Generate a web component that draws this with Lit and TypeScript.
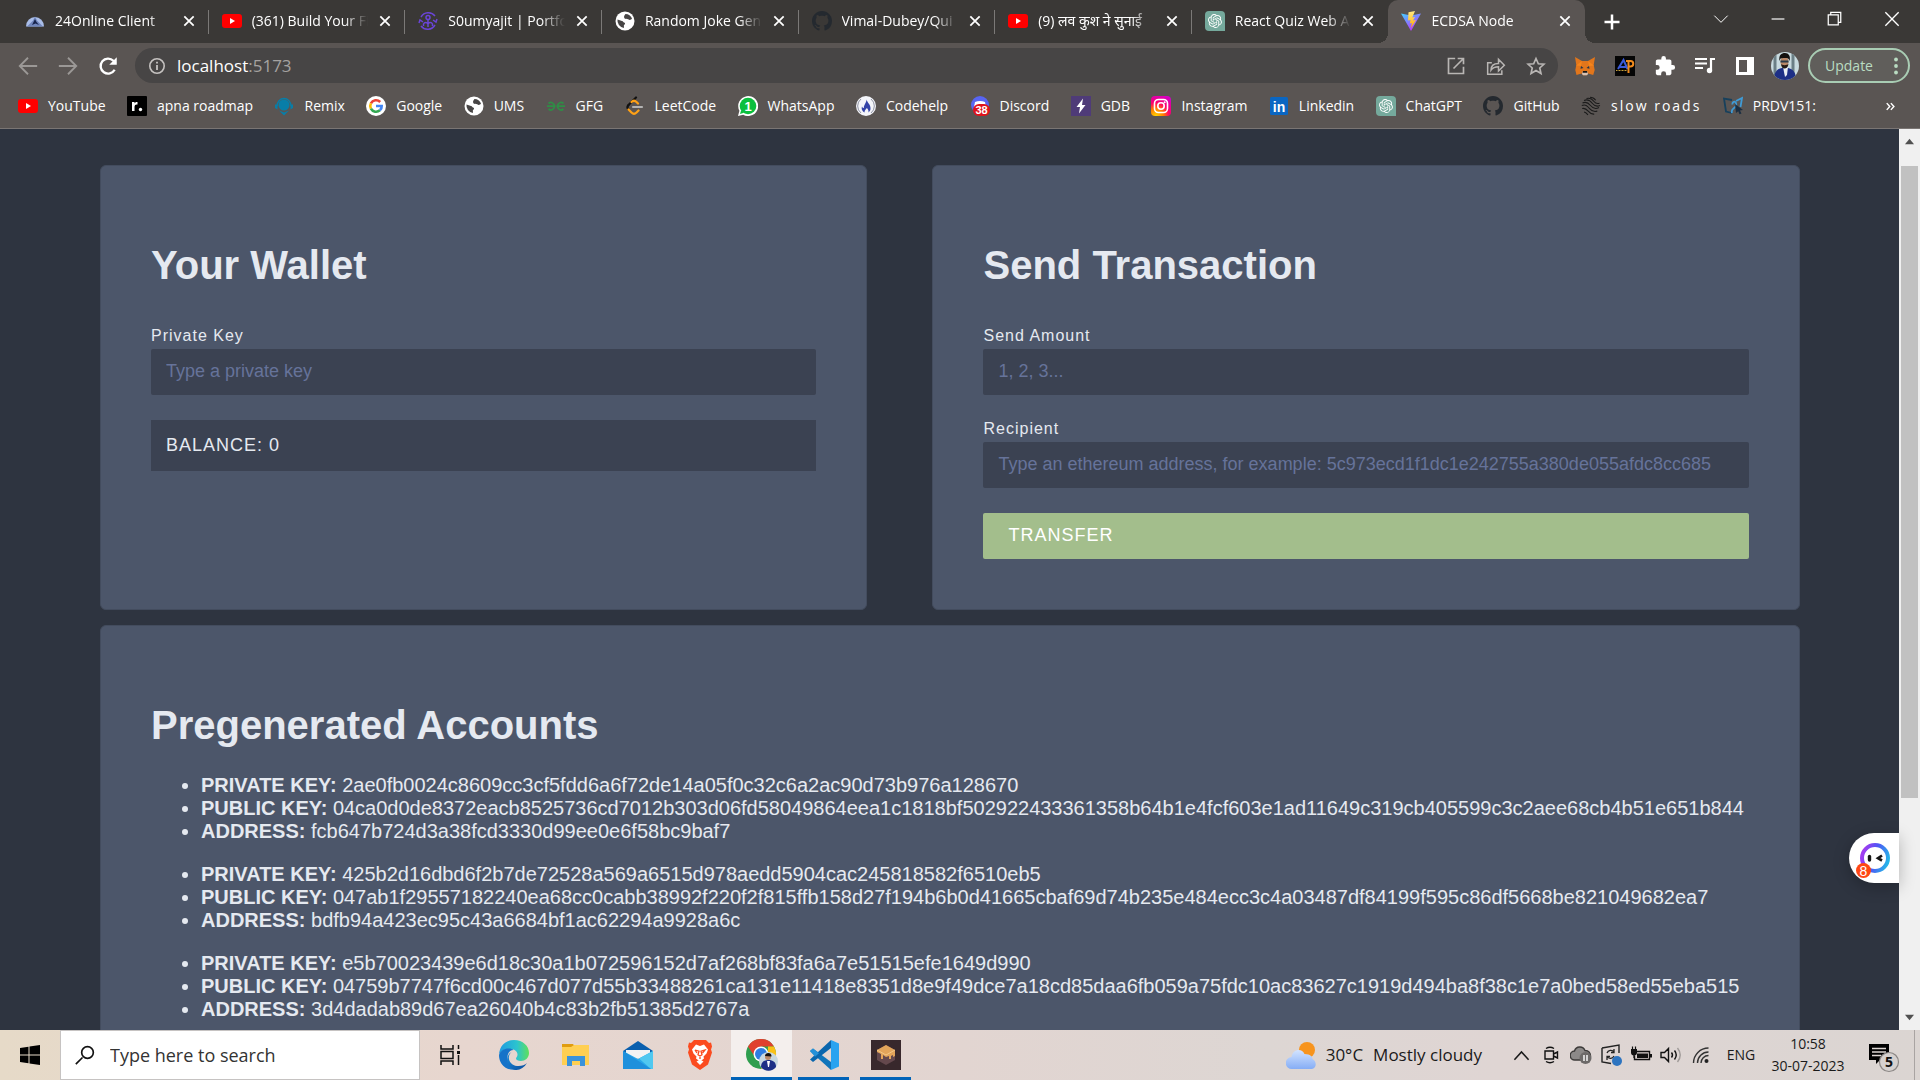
import { LitElement, html, css, svg, TemplateResult } from "lit";
import { customElement } from "lit/decorators.js";

/* ---------- icons ---------- */

const GITHUB =
  "M8 0C3.58 0 0 3.58 0 8c0 3.54 2.29 6.53 5.47 7.59.4.07.55-.17.55-.38 0-.19-.01-.82-.01-1.49-2.01.37-2.53-.49-2.69-.94-.09-.23-.48-.94-.82-1.13-.28-.15-.68-.52-.01-.53.63-.01 1.08.58 1.23.82.72 1.21 1.87.87 2.33.66.07-.52.28-.87.51-1.07-1.78-.2-3.64-.89-3.64-3.95 0-.87.31-1.59.82-2.15-.08-.2-.36-1.02.08-2.12 0 0 .67-.21 2.2.82.64-.18 1.32-.27 2-.27.68 0 1.36.09 2 .27 1.53-1.04 2.2-.82 2.2-.82.44 1.1.16 1.92.08 2.12.51.56.82 1.27.82 2.15 0 3.07-1.87 3.75-3.65 3.95.29.25.54.73.54 1.48 0 1.07-.01 1.93-.01 2.2 0 .21.15.46.55.38A8.013 8.013 0 0016 8c0-4.42-3.58-8-8-8z";
const KNOT =
  "M22.2819 9.8211a5.9847 5.9847 0 0 0-.5157-4.9108 6.0462 6.0462 0 0 0-6.5098-2.9A6.0651 6.0651 0 0 0 4.9807 4.1818a5.9847 5.9847 0 0 0-3.9977 2.9 6.0462 6.0462 0 0 0 .7427 7.0966 5.98 5.98 0 0 0 .511 4.9107 6.051 6.051 0 0 0 6.5146 2.9001A5.9847 5.9847 0 0 0 13.2599 24a6.0557 6.0557 0 0 0 5.7718-4.2058 5.9894 5.9894 0 0 0 3.9977-2.9001 6.0557 6.0557 0 0 0-.7475-7.0729zm-9.022 12.6081a4.4755 4.4755 0 0 1-2.8764-1.0408l.1419-.0804 4.7783-2.7582a.7948.7948 0 0 0 .3927-.6813v-6.7369l2.02 1.1686a.071.071 0 0 1 .038.052v5.5826a4.504 4.504 0 0 1-4.4945 4.4944zm-9.6607-4.1254a4.4708 4.4708 0 0 1-.5346-3.0137l.142.0852 4.783 2.7582a.7712.7712 0 0 0 .7806 0l5.8428-3.3685v2.3324a.0804.0804 0 0 1-.0332.0615L9.74 19.9502a4.4992 4.4992 0 0 1-6.1408-1.6464zM2.3408 7.8956a4.485 4.485 0 0 1 2.3655-1.9728V11.6a.7664.7664 0 0 0 .3879.6765l5.8144 3.3543-2.0201 1.1685a.0757.0757 0 0 1-.071 0l-4.8303-2.7865A4.504 4.504 0 0 1 2.3408 7.872zm16.5963 3.8558L13.1038 8.364 15.1192 7.2a.0757.0757 0 0 1 .071 0l4.8303 2.7913a4.4944 4.4944 0 0 1-.6765 8.1042v-5.6772a.79.79 0 0 0-.407-.667zm2.0107-3.0231l-.142-.0852-4.7735-2.7818a.7759.7759 0 0 0-.7854 0L9.409 9.2297V6.8974a.0662.0662 0 0 1 .0284-.0615l4.8303-2.7866a4.4992 4.4992 0 0 1 6.6802 4.66zM8.3065 12.863l-2.02-1.1638a.0804.0804 0 0 1-.038-.0567V6.0742a4.4992 4.4992 0 0 1 7.3757-3.4537l-.142.0805L8.704 5.459a.7948.7948 0 0 0-.3927.6813zm1.0976-2.3654l2.602-1.4998 2.6069 1.4998v2.9994l-2.5974 1.4997-2.6067-1.4997Z";

const icon = (size: number, box: string, body: unknown): TemplateResult =>
  html`<svg width=${size} height=${size} viewBox=${box} aria-hidden="true">${body}</svg>`;

const youtube = icon(20, "0 0 20 20", svg`
  <rect y="3" width="20" height="14" rx="3" fill="#f00"/><path d="M8 7l5 3-5 3z" fill="#fff"/>`);
const globe = icon(20, "0 0 20 20", svg`
  <circle cx="10" cy="10" r="9.5" fill="#fff"/>
  <path d="M2.500 8.500l4.500 1.400c1.300.4 1 1.200 2.200 1.600 1.300.5 1.100 2-.3 2.500v3A7.500 7.500 0 0 1 2.500 8.500z" fill="#474545"/>
  <path d="M10.500 3c3 0 5.500 1.800 6.500 4.500-1.200 1.700-2.500 1.700-3.800.8-1.300-.9-2.900.1-3.800-1.100-.9-1.400 0-3 1.100-4.200z" fill="#474545"/>`);
const github = icon(20, "0 0 16 16", svg`<path d=${GITHUB} fill="#24292f"/>`);
const chatgpt = icon(20, "0 0 20 20", svg`
  <path d="M4 0h12a4 4 0 0 1 4 4v16H4a4 4 0 0 1-4-4V4a4 4 0 0 1 4-4z" fill="#75a99c"/>
  <g transform="translate(3 3) scale(.58)"><path d=${KNOT} fill="#fff"/></g>`);

const favicons: Record<string, TemplateResult> = {
  youtube,
  globe,
  github,
  chatgpt,
  online: icon(20, "0 0 20 20", svg`
    <path d="M1 15.500a9 9.500 0 0 1 18 0z" fill="#a9bde8"/><path d="M2 15.500l6-6 2-4 2 4 6 6z" fill="#7187bd"/>
    <path d="M7 14l3-6 1.500 3 2.500 3-3.500-1.500z" fill="#17244d"/>`),
  portfolio: icon(20, "0 0 20 20", svg`
    <g fill="none" stroke="#6a45d8" stroke-width="1.500"><path d="M3 6a8.500 8.500 0 0 1 14-1M3 15a8.500 8.500 0 0 0 14-1M1 12l1-3 3 2M19 8l-1 3-3-2"/>
    <circle cx="10" cy="6.500" r="2"/><path d="M5.500 15v-2a2.500 2.500 0 0 1 4.500 0 2.500 2.500 0 0 1 4.500 0v2M10 9v7"/></g>`),
  vite: icon(20, "0 0 20 20", svg`
    <defs><linearGradient id="vite-a" x1="0" y1="0" x2=".6" y2="1"><stop stop-color="#41d1ff"/><stop offset="1" stop-color="#bd34fe"/></linearGradient>
    <linearGradient id="vite-b" x1="0" y1="0" x2="0" y2="1"><stop stop-color="#ffea83"/><stop offset="1" stop-color="#ffa800"/></linearGradient></defs>
    <path d="M0 2.500l10 17.500 10-17.500-10 2z" fill="url(#vite-a)"/><path d="M14 0L7.500 1.300 7 9.500l2.500-.5-.7 3.500 2-.6L10 17l5-8-3 .6 2-3.600-2.700.5z" fill="url(#vite-b)"/>`),
  roadmap: icon(20, "0 0 20 20", svg`
    <rect width="20" height="20" rx="1" fill="#000"/><path d="M5 15V6h2.500v1.500C8 6.300 9 5.800 10.500 6v2.500C8.500 8.300 7.500 9 7.500 11v4z" fill="#fff"/><circle cx="13.500" cy="13.500" r="1.700" fill="#fff"/>`),
  remix: icon(20, "0 0 20 20", svg`
    <circle cx="10" cy="9" r="5.500" fill="#087ea8"/><path d="M3 10a7 7.500 0 0 1 14 0" fill="none" stroke="#087ea8" stroke-width="1.300"/>
    <path d="M1 8.500h2.500v5L1 12zM19 8.500h-2.500v5L19 12zM5 14.500l5 2 5-2-5 5z" fill="#087ea8"/>`),
  google: icon(20, "0 0 20 20", svg`
    <circle cx="10" cy="10" r="10" fill="#fff"/><g fill="none" stroke-width="2.600">
    <path d="M14.200 6A5.800 5.800 0 0 0 4.900 7.300" stroke="#ea4335"/><path d="M4.900 7.300a5.800 5.800 0 0 0 0 5.400" stroke="#fbbc05"/>
    <path d="M4.900 12.700a5.800 5.800 0 0 0 9 1.600" stroke="#34a853"/><path d="M13.900 14.300A5.500 5.500 0 0 0 15.700 10H10" stroke="#4285f4"/></g>`),
  gfg: icon(20, "0 0 20 20", svg`
    <g fill="none" stroke="#2f8d46" stroke-width="1.700"><path d="M2.500 7.500a3.600 3.600 0 1 1 0 5.500M1 10.200h8.500M17.500 7.500a3.600 3.600 0 1 0 0 5.500M19 10.200h-8.500"/></g>`),
  leetcode: icon(20, "0 0 20 20", svg`
    <g fill="none" stroke-linecap="round" stroke-width="2.200"><path d="M12 1.500L4.500 9" stroke="#111"/><path d="M4.500 9c-1.500 1.500-1.500 3 0 4.500" stroke="#111"/>
    <path d="M7.500 6c1.500-1.500 3.500-1.500 5 0l1.500 1.500M4.500 13.500l3 3c1.500 1.500 3.500 1.500 5 0l2-2" stroke="#ffa116"/><path d="M9 11h9" stroke="#b3b3b3"/></g>`),
  whatsapp: icon(20, "0 0 20 20", svg`
    <path d="M0 20l1.400-5.200A10 10 0 1 1 5.200 18.700z" fill="#fff"/><circle cx="10" cy="10" r="8.300" fill="#0bbf3e"/><path d="M2 18l1.200-4 2.800 2.700z" fill="#0bbf3e"/>
    <text x="10" y="14.500" font-size="13" font-weight="700" text-anchor="middle" fill="#fff">1</text>`),
  codehelp: icon(20, "0 0 20 20", svg`
    <circle cx="10" cy="10" r="10" fill="#f4f5fa"/><path d="M5 3a9 9 0 0 0 0 14M15 3a9 9 0 0 1 0 14" fill="none" stroke="#8f93a3"/>
    <path d="M10.500 3.500c.5 3 4.500 5 4 9.500-.3 1.800-1 2.600-2 3.500.3-2-.5-3.500-1.800-4.500-.6 1.500-2 1.500-2.200 4.500-2-1-3.500-3.500-2.500-6 .5 1 1 1.500 1.800 1.500 0-3.500 2.700-5 2.700-8.500z" fill="#3443a8"/>`),
  discord: icon(20, "0 0 20 20", svg`
    <circle cx="10" cy="9" r="9" fill="#5865f2"/><path d="M5 6c3-1.500 7-1.500 10 0l1 5H4z" fill="#fff"/>
    <rect x="3" y="8" width="17" height="12" rx="6" fill="#e0131b"/><text x="11.500" y="18" font-size="11" font-weight="700" text-anchor="middle" fill="#fff">38</text>`),
  gdb: icon(20, "0 0 20 20", svg`<rect width="20" height="20" fill="#4f3b78"/><path d="M12 2.500L5.500 11H9l-1 6.500L14.500 9H11z" fill="#fff"/>`),
  instagram: icon(20, "0 0 20 20", svg`
    <defs><radialGradient id="insta" cx=".25" cy="1" r="1.100"><stop stop-color="#ffd600"/><stop offset=".35" stop-color="#ff7a00"/><stop offset=".6" stop-color="#ff0169"/><stop offset="1" stop-color="#d300c5"/></radialGradient></defs>
    <rect width="20" height="20" rx="4" fill="url(#insta)"/><g fill="none" stroke="#fff" stroke-width="1.600"><rect x="3.500" y="3.500" width="13" height="13" rx="4"/><circle cx="10" cy="10" r="3.200"/></g><circle cx="13.700" cy="6.300" r="1" fill="#fff"/>`),
  linkedin: icon(20, "0 0 20 20", svg`<rect x="1" y="1" width="18" height="18" rx="1.500" fill="#0a66c2"/>
    <text x="10" y="15.500" font-size="14" font-weight="700" text-anchor="middle" fill="#fff">in</text>`),
  roads: icon(20, "0 0 20 20", svg`
    <g fill="none" stroke="#1b1b1b" stroke-width="1.100"><path d="M1.500 7c4-2 6 0 8 2.500s5 4 8.500 2M.8 9.500c4-1.500 5.500.5 7.500 2.800s4.700 4 8 2.700M1.200 12.500c3-.8 4.300.6 6 2.600s3.300 3.300 6 3M3 4.500c4.500-2 6.800.8 8.500 3s4 3.500 7.500 2M5.500 2.500c4-1 6 1 7.500 3s2.800 2.600 5.500 1.700M9 1.200c3 0 4.500 1.300 5.700 3M3 16c1.500 0 2.500 1 4 2.800"/></g>`),
  prdv: icon(20, "0 0 20 20", svg`
    <g fill="none" stroke-width="1.800"><path d="M9 4L1 2.500l2 13L9 17" stroke="#17405c"/><path d="M9 17c-2-6 6-4 4-10-1-2.500-4-1-3.500 1.500M13 5l6-3-1.500 9" stroke="#3f9bd6"/></g><path d="M12 8l8 6-3 .5 1.500 3-2 .8-1.200-3-2.300 1.700z" fill="#1c2f42"/>`),
};

const line = (size: number, d: string, width = 2, color = "currentColor") =>
  icon(size, "0 0 24 24", svg`<path d=${d} fill="none" stroke=${color} stroke-width=${width}/>`);

/* ---------- browser frame ---------- */

interface Tab { icon: string; title: string; active?: boolean }

const TABS: Tab[] = [
  { icon: "online", title: "24Online Client" },
  { icon: "youtube", title: "(361) Build Your Fi" },
  { icon: "portfolio", title: "S0umyajit | Portfo" },
  { icon: "globe", title: "Random Joke Gen" },
  { icon: "github", title: "Vimal-Dubey/Qui" },
  { icon: "youtube", title: "(9) लव कुश ने सुनाई" },
  { icon: "chatgpt", title: "React Quiz Web A" },
  { icon: "vite", title: "ECDSA Node", active: true },
];

const BOOKMARKS: Array<[string, string]> = [
  ["youtube", "YouTube"], ["roadmap", "apna roadmap"], ["remix", "Remix"], ["google", "Google"],
  ["globe", "UMS"], ["gfg", "GFG"], ["leetcode", "LeetCode"], ["whatsapp", "WhatsApp"],
  ["codehelp", "Codehelp"], ["discord", "Discord"], ["gdb", "GDB"], ["instagram", "Instagram"],
  ["linkedin", "Linkedin"], ["chatgpt", "ChatGPT"], ["github", "GitHub"], ["roads", "slow roads"],
  ["prdv", "PRDV151:"],
];

const resets = css`
  * { box-sizing: border-box; }
  svg { display: block; flex: none; }
  button { border: 0; background: none; color: inherit; font: inherit; padding: 0; display: flex; align-items: center; justify-content: center; }
  a { color: inherit; text-decoration: none; }
`;

@customElement("browser-frame")
export class BrowserFrame extends LitElement {
  static styles = [resets, css`
    :host { display: block; color: #fff; background: #5a5553; font: 14px/20px "Open Sans", "Noto Sans", sans-serif; border-bottom: 1px solid #7a7573; }
    .strip { display: flex; height: 43px; padding-left: 12px; background: #3a3836; }
    .tabs { flex: 1; min-width: 0; display: flex; }
    .tab { flex: 1; min-width: 0; display: flex; align-items: center; padding: 0 13px 2px; position: relative; }
    .tab:not(.active)::after { content: ""; position: absolute; right: 0; top: 10px; height: 24px; width: 1px; background: #7b7977; }
    .tab.beside::after { display: none; }
    .tab.active { background: #5a5553; border-radius: 10px 10px 0 0; }
    .tab.active::before, .tab.active::after { content: ""; position: absolute; bottom: 0; width: 10px; height: 10px; }
    .tab.active::before { left: -10px; background: radial-gradient(circle at 0 0, transparent 10px, #5a5553 10px); }
    .tab.active::after { right: -10px; background: radial-gradient(circle at 100% 0, transparent 10px, #5a5553 10px); }
    .tab a { flex: 1; min-width: 0; margin: 0 8px 0 10px; overflow: hidden; white-space: nowrap; mask-image: linear-gradient(90deg, #000 calc(100% - 26px), transparent calc(100% - 2px)); }
    .new { width: 54px; }
    .window { display: flex; height: 37px; margin-left: 53px; }
    .window button { width: 57px; }
    .toolbar { display: flex; align-items: center; height: 45px; padding: 0 10px 0 8px; }
    .nav { width: 40px; }
    .dim { color: #9b9896; }
    .omnibox { flex: 1; display: flex; align-items: center; gap: 10px; height: 35px; margin-left: 7px; padding: 0 12px; border-radius: 18px; background: #474545; }
    .address { flex: 1; font-size: 17px; line-height: 24px; }
    .address span { color: #a5a2a0; }
    .omnibox button { width: 20px; margin-left: 10px; color: #b9b6b4; }
    .extensions { display: flex; align-items: center; margin: 0 3px 0 7px; }
    .extensions button { width: 40px; }
    .update { height: 35px; width: 102px; gap: 14px; padding-left: 12px; border: 2px solid #a9cdb4; border-radius: 18px; color: #b9dcc2; background: #605e5b; }
    .bookmarks { display: flex; align-items: center; height: 40px; padding: 0 25px 4px 18px; }
    .links { flex: 1; min-width: 0; display: flex; justify-content: space-between; margin-right: 70px; }
    .links a { display: flex; align-items: center; gap: 10px; white-space: nowrap; }
    .wide { letter-spacing: 2px; }
    text { font-family: "Liberation Sans", sans-serif; }
  `];

  private readonly close = line(14, "M4 4l16 16M20 4L4 20", 3);

  render() {
    return html`
      <nav class="strip" aria-label="Tabs">
        <div class="tabs">
          ${TABS.map((t, i) => html`
            <div class="tab ${t.active ? "active" : ""} ${TABS[i + 1]?.active ? "beside" : ""}">
              ${favicons[t.icon]}<a href="#">${t.title}</a>
              <button aria-label="Close tab">${this.close}</button>
            </div>`)}
        </div>
        <button class="new" aria-label="New tab">${line(20, "M12 3v18M3 12h18", 3)}</button>
        <div class="window">
          <button aria-label="Search tabs">${line(16, "M2 7l10 10L22 7", 1.5)}</button>
          <button aria-label="Minimise">${line(14, "M1 12h22", 2)}</button>
          <button aria-label="Restore">${line(15, "M2 6h16v16H2zM6 6V2h16v16h-4", 2)}</button>
          <button aria-label="Close">${line(16, "M2 2l20 20M22 2L2 22", 2)}</button>
        </div>
      </nav>
      <div class="toolbar">
        <button class="nav dim" aria-label="Back">${line(22, "M22 12H4M12 3l-9 9 9 9", 2)}</button>
        <button class="nav dim" aria-label="Forward">${line(22, "M2 12h18M12 3l9 9-9 9", 2)}</button>
        <button class="nav" aria-label="Reload">${icon(20, "0 0 24 24", svg`
          <path d="M20 16.500A9 9 0 1 1 18.500 5.700L21 8.500" fill="none" stroke="currentColor" stroke-width="2.800"/><path d="M22.500 1.500v9h-9z" fill="currentColor"/>`)}</button>
        <div class="omnibox">
          ${icon(20, "0 0 20 20", svg`<circle cx="10" cy="10" r="7.200" fill="none" stroke="#c5c2c0" stroke-width="1.600"/><path d="M10 9v5M10 5.800v1.800" stroke="#c5c2c0" stroke-width="1.800"/>`)}
          <div class="address">localhost<span>:5173</span></div>
          <button aria-label="Open in app">${line(20, "M11 3H3v18h18v-8M14 3h7v7M21 3L9 15", 2)}</button>
          <button aria-label="Share">${line(20, "M7 8H2v14h17v-5M6 17c0-6 4-8 9-8V4l7 7-7 7v-5c-4 0-7 1-9 4z", 1.8)}</button>
          <button aria-label="Bookmark">${line(20, "M12 3l2.800 6.300 6.700.6-5 4.500 1.500 6.700-6-3.600-6 3.600 1.500-6.700-5-4.500 6.700-.6z", 2)}</button>
        </div>
        <div class="extensions">
          <button aria-label="MetaMask">${icon(20, "0 0 20 20", svg`
            <path d="M0 1l7 4h6l7-4-1.300 8 1 5-1.500 5-5-1.500-2 1.700H8.500l-2-1.700-5 1.500L.3 14l1-5z" fill="#e2761b"/><path d="M7 5L1 9.500 6 10zM13 5l6 4.500-5 .5z" fill="#f6851b"/>
            <path d="M6 10l2.500 2-3 .8zM14 10l-2.500 2 3 .8z" fill="#233447"/><path d="M7.500 15.500h5l.5 2.500-1 1.200H8L7 18z" fill="#d7c1b3"/><path d="M8 15h4l.4 1.800H7.600z" fill="#161616"/>`)}</button>
          <button aria-label="AP Extension">${icon(20, "0 0 20 20", svg`
            <rect width="20" height="20" fill="#050505"/><g fill="none" stroke-width="2"><path d="M3 13L8.500 4l4 9M5 11h7" stroke="#3c5bd8"/><path d="M11 5h4.500a2.700 2.700 0 0 1 0 5.500H13M13.500 5v12" stroke="#f08a1d"/></g><path d="M1 14.500h11" stroke="#c9a13a" stroke-width="1.200" stroke-dasharray="1 .5"/>`)}</button>
          <button aria-label="Extensions">${icon(22, "0 0 24 24", svg`
            <path d="M20.500 11H19V7c0-1.100-.9-2-2-2h-4V3.500a2.500 2.500 0 0 0-5 0V5H4c-1.100 0-2 .9-2 2v3.800h1.500a2.700 2.700 0 0 1 0 5.400H2V20c0 1.100.9 2 2 2h3.800v-1.500a2.700 2.700 0 0 1 5.400 0V22H17c1.100 0 2-.9 2-2v-4h1.500a2.500 2.500 0 0 0 0-5z" fill="#fff"/>`)}</button>
          <button aria-label="Media">${icon(22, "0 0 22 22", svg`
            <path d="M1 4h12M1 8.500h12M1 13h8" stroke="#fff" stroke-width="2"/><path d="M21 4h-4v11" fill="none" stroke="#fff" stroke-width="2.200"/><circle cx="15.500" cy="15.500" r="2.700" fill="#fff"/>`)}</button>
          <button aria-label="Side panel">${icon(18, "0 0 18 18", svg`<path d="M0 0h18v18H0zM3 3v12h8V3z" fill="#fff" fill-rule="evenodd"/>`)}</button>
          <button aria-label="Profile">${icon(28, "0 0 28 28", svg`
            <defs><clipPath id="face"><circle cx="14" cy="14" r="14"/></clipPath></defs>
            <g clip-path="url(#face)"><rect width="28" height="28" fill="#c9dbe0"/><path d="M4 0v28M22 0v28" stroke="#6b7f86" stroke-width="3"/>
            <path d="M3 28c0-8 3-11 8-12h6c5 1 8 4 8 12z" fill="#1d2f86"/><path d="M12 15h5l-1 8-2 2z" fill="#e8edf4"/><ellipse cx="13.500" cy="10" rx="4" ry="5.500" fill="#b98868"/>
            <path d="M8.500 9c-1-6 2-8 5.500-8s6 3 4.500 8c-.5-2-1.500-3-3-3s-5 0-6 .5z" fill="#14110f"/><path d="M9.500 8.500h8v2h-8z" fill="#2a3a4a"/><path d="M10 12c1 1.500 6 1.500 7.500 0-.5 3-2 4.500-4 4.500s-3-1.500-3.500-4.500z" fill="#241a16"/></g>`)}</button>
        </div>
        <button class="update">Update ${icon(18, "0 0 18 18", svg`<g fill="#b9dcc2"><circle cx="9" cy="2.500" r="1.900"/><circle cx="9" cy="9" r="1.900"/><circle cx="9" cy="15.500" r="1.900"/></g>`)}</button>
      </div>
      <nav class="bookmarks" aria-label="Bookmarks">
        <div class="links">
          ${BOOKMARKS.map(([i, name]) => html`<a href="#">${favicons[i]}<span class=${name === "slow roads" ? "wide" : ""}>${name}</span></a>`)}
        </div>
        <button aria-label="More bookmarks">${line(9, "M2 3l8 9-8 9M13 3l8 9-8 9", 4)}</button>
      </nav>`;
  }
}

/* ---------- wallet page ---------- */

const ACCOUNTS = [
  {
    key: "2ae0fb0024c8609cc3cf5fdd6a6f72de14a05f0c32c6a2ac90d73b976a128670",
    pub: "04ca0d0de8372eacb8525736cd7012b303d06fd58049864eea1c1818bf502922433361358b64b1e4fcf603e1ad11649c319cb405599c3c2aee68cb4b51e651b844",
    address: "fcb647b724d3a38fcd3330d99ee0e6f58bc9baf7",
  },
  {
    key: "425b2d16dbd6f2b7de72528a569a6515d978aedd5904cac245818582f6510eb5",
    pub: "047ab1f29557182240ea68cc0cabb38992f220f2f815ffb158d27f194b6b0d41665cbaf69d74b235e484ecc3c4a03487df84199f595c86df5668be821049682ea7",
    address: "bdfb94a423ec95c43a6684bf1ac62294a9928a6c",
  },
  {
    key: "e5b70023439e6d18c30a1b072596152d7af268bf83fa6a7e51515efe1649d990",
    pub: "04759b7747f6cd00c467d077d55b33488261ca131e11418e8351d8e9f49dce7a18cd85daa6fb059a75fdc10ac83627c1919d494ba8f38c1e7a0bed58ed55eba515",
    address: "3d4dadab89d67ea26040b4c83b2fb51385d2767a",
  },
];

@customElement("wallet-page")
export class WalletPage extends LitElement {
  static styles = [resets, css`
    :host { display: flex; min-height: 0; overflow: hidden; position: relative; color: #e5e9f0; background: #2e3440; font: 20px/23px "Liberation Sans", Arial, sans-serif; }
    .page { flex: 1; min-width: 0; padding: 36px 99px 0 100px; }
    .columns { display: grid; grid-template-columns: 767fr 867fr; gap: 65px; margin-bottom: 15px; }
    .card { border: 1px solid #434c5e; border-radius: 6px; padding: 50px; background: #4c566a; }
    h1 { margin: 26px 0; font-size: 40px; line-height: 46px; }
    form { display: flex; flex-direction: column; gap: 25px; padding-top: 13px; }
    .field { display: flex; flex-direction: column; gap: 4px; font-size: 16px; line-height: 18px; }
    label { letter-spacing: 1px; }
    input, .transfer { height: 46px; border: 0; border-radius: 2px; font: 18px/21px "Liberation Sans", Arial, sans-serif; }
    input { padding: 0 15px 2px; background: #3b4252; color: #e5e9f0; }
    input::placeholder { color: #66739a; opacity: 1; }
    .balance { height: 51px; padding: 15px; background: #3b4252; font-size: 18px; line-height: 21px; letter-spacing: 1px; }
    .transfer { justify-content: flex-start; padding: 0 25px 2px; background: #a3be8c; color: #fff; letter-spacing: 1px; }
    ul { margin: 0 0 20px; padding-left: 50px; white-space: nowrap; }
    .scrollbar { width: 21px; padding: 8px 2px; display: flex; flex-direction: column; align-items: center; background: #f0f0f0; color: #505050; }
    .track { flex: 1; align-self: stretch; margin: 20px 0 16px; }
    .thumb { height: 76%; background: #c1c1c1; }
    .assistant { position: absolute; right: 21px; bottom: 147px; width: 50px; height: 50px; padding-right: 8px; justify-content: flex-end; border-radius: 25px 0 0 25px; background: #fff; box-shadow: 0 4px 16px rgba(0, 0, 0, 0.25); }
  `];

  render() {
    return html`
      <main class="page">
        <div class="columns">
          <section class="card">
            <h1>Your Wallet</h1>
            <form>
              <div class="field"><label for="key">Private Key</label><input id="key" placeholder="Type a private key" /></div>
              <div class="balance">BALANCE: 0</div>
            </form>
          </section>
          <section class="card">
            <h1>Send Transaction</h1>
            <form>
              <div class="field"><label for="amount">Send Amount</label><input id="amount" placeholder="1, 2, 3..." /></div>
              <div class="field"><label for="recipient">Recipient</label><input id="recipient" placeholder="Type an ethereum address, for example: 5c973ecd1f1dc1e242755a380de055afdc8cc685" /></div>
              <button type="button" class="transfer">TRANSFER</button>
            </form>
          </section>
        </div>
        <section class="card">
          <h1>Pregenerated Accounts</h1>
          ${ACCOUNTS.map((a) => html`
            <ul>
              <li><b>PRIVATE KEY:</b> ${a.key}</li>
              <li><b>PUBLIC KEY:</b> ${a.pub}</li>
              <li><b>ADDRESS:</b> ${a.address}</li>
            </ul>`)}
        </section>
      </main>
      <div class="scrollbar" aria-hidden="true">
        ${icon(9, "0 0 10 10", svg`<path d="M0 8l5-6 5 6z" fill="currentColor"/>`)}
        <div class="track"><div class="thumb"></div></div>
        ${icon(9, "0 0 10 10", svg`<path d="M0 2l5 6 5-6z" fill="currentColor"/>`)}
      </div>
      <button class="assistant" aria-label="Assistant">${icon(40, "0 0 40 40", svg`
        <defs><linearGradient id="ring" x1="0" y1=".4" x2="1" y2=".7"><stop stop-color="#a13cf0"/><stop offset=".45" stop-color="#4f55f5"/><stop offset="1" stop-color="#25b6e8"/></linearGradient></defs>
        <circle cx="24" cy="20" r="13" fill="none" stroke="url(#ring)" stroke-width="4"/>
        <path d="M18.500 18.500v3.500" stroke="#151515" stroke-width="3.400" stroke-linecap="round"/><path d="M31 17.500l-4 2.700 4 2.300" fill="none" stroke="#151515" stroke-width="2.600"/>
        <circle cx="12.500" cy="32.500" r="7.500" fill="#ff4713"/><text x="12.500" y="37.500" font-size="14" text-anchor="middle" fill="#fff">8</text>`)}</button>`;
  }
}

/* ---------- taskbar ---------- */

const APPS: Array<{ name: string; art: TemplateResult; state?: string }> = [
  { name: "Edge", art: icon(30, "0 0 30 30", svg`
    <defs><linearGradient id="edge-a" x1="0" y1=".3" x2="1" y2=".3"><stop stop-color="#1f9be0"/><stop offset=".6" stop-color="#2bc4cf"/><stop offset="1" stop-color="#5fe05a"/></linearGradient>
    <linearGradient id="edge-b" x1="0" y1="0" x2="1" y2="1"><stop stop-color="#1b8fe0"/><stop offset="1" stop-color="#0b4a9a"/></linearGradient></defs>
    <path d="M0 14C1 5 7 0 15 0c9 0 15 6 15 13 0 5-4 8-8 8-3 0-5-1-5-2.500 0-1 1.500-1.500 1.500-4C18.500 11 15 9 11 9 6 9 2 11 0 14z" fill="url(#edge-a)"/>
    <path d="M0 15c1-4 5-6.500 9.500-6.500 2.500 0 4 .5 5 1.500C11 10 8.500 13 8.500 17c0 5 3.500 9 8.500 12.500C8 31 0 25 0 15z" fill="#1673c9"/>
    <path d="M12.500 12C7 17 10.500 25 18 26c4 .5 8-1 10-3-3 5-7.500 7.300-12 7C10 28.500 7.500 23 8.500 18c.5-3 2-5 4-6z" fill="url(#edge-b)"/>`) },
  { name: "File Explorer", art: icon(30, "0 0 30 30", svg`
    <path d="M1 4h11l2 3v5H1z" fill="#e09c10"/><path d="M1 7h9l3-2h15v20H1z" fill="#ffcf52"/><path d="M6 16h18v10h-5v-5h-8v5H6z" fill="#3a93db"/>`) },
  { name: "Mail", art: icon(30, "0 0 30 30", svg`
    <path d="M0 11L15 1l15 10v4H0z" fill="#0a5fae"/><path d="M3 10h24v8H3z" fill="#f3f3f3"/><path d="M0 11l15 8 15-8v18H0z" fill="#28a8ea"/><path d="M16 18.500L30 11v18h-2z" fill="#50c8f0"/><path d="M0 29V11l28 18z" fill="#1e90dc"/>`) },
  { name: "Brave", art: icon(30, "0 0 30 30", svg`
    <path d="M9 0h12l3 3 2-.5 1 4-1 3 1 3-4 12-8 5.500-8-5.500-4-12 1-3-1-3 1-4 2 .5z" fill="#fb4b1f"/>
    <path d="M15 6l4-1.500 4 5-1.500 4-3 3 .5 2-4 3-4-3 .5-2-3-3-1.500-4 4-5z" fill="#fff"/><path d="M10 10l4 1.200-1 3.500 2 1.300 2-1.300-1-3.500 4-1.200-2.500 3M10 10l2 3M15 17v2" fill="none" stroke="#fb4b1f" stroke-width="1.300"/><path d="M11.500 21.500l3.500-2 3.500 2-3.500 3.500z" fill="#fff"/>`) },
  { name: "Chrome", state: "focused", art: icon(32, "0 0 32 32", svg`
    <circle cx="15" cy="15" r="15" fill="#2f9e4f"/><path d="M2 7.500A15 15 0 0 1 28 7.500H15L9 18z" fill="#e0402f"/><path d="M15 30L21.500 18 22 7.500h6A15 15 0 0 1 15 30z" fill="#fbc116"/>
    <circle cx="15" cy="15" r="7.500" fill="#fff"/><circle cx="15" cy="15" r="6" fill="#2f7de1"/>
    <circle cx="22.500" cy="22.500" r="9.500" fill="#c8d8e0"/><path d="M15 28c0-5 3-7 7.500-7s7.500 2 7.500 7a9.500 9.500 0 0 1-15 0z" fill="#1d2f86"/><circle cx="22" cy="18" r="3" fill="#b98868"/><path d="M19 17c0-4 7-4 6.500.5z" fill="#14110f"/><path d="M21 22h3l-1 6h-1z" fill="#fff"/>`) },
  { name: "VS Code", state: "open", art: icon(30, "0 0 30 30", svg`
    <path d="M1 11l3-2.500L22 22v8z" fill="#1075bb"/><path d="M1 19.500L4 22 22 8V0z" fill="#0a66ad"/><path d="M22 0l8 3.500v23L22 30z" fill="#29a3f0"/><path d="M1 11l3-2.500 6 4.700-4 3.500z" fill="#2591d8"/>`) },
  { name: "Cube", state: "open", art: icon(30, "0 0 30 30", svg`
    <rect width="30" height="30" fill="#38282c"/><path d="M15 5l9 5v10l-9 5-9-5V10z" fill="#64484d"/><path d="M15 5l9 5v6l-2 1v-2l-2 1v3h-2v-3l-3 1-3-2v4h-2v-5l-4-2v-2z" fill="#e2a45a"/><path d="M6 10l9 5 9-5" fill="none" stroke="#f3c787" stroke-width="1"/>`) },
];

@customElement("desktop-taskbar")
export class DesktopTaskbar extends LitElement {
  static styles = [resets, css`
    :host { display: flex; height: 50px; color: #1a1a1a; font: 14px/22px "Open Sans", "Noto Sans", sans-serif; background: linear-gradient(90deg, #e6dac8 0, #e7d6cf 24%, #e2d5d1 50%, #ddd6d3 66%, #dfd5d3 78%, #dbd5d2 100%); }
    .start { width: 60px; }
    .search { flex: 0 1 360px; display: flex; align-items: center; gap: 15px; padding: 0 14px; border: 1px solid #c6c3c2; background: #fff; }
    .search input { flex: 1; min-width: 0; border: 0; padding: 0; background: none; color: #333; font: 18px/24px "Open Sans", "Noto Sans", sans-serif; }
    .search input::placeholder { color: #333; opacity: 1; }
    .view { width: 60px; }
    .apps { display: flex; flex: 1; gap: 1px; padding-left: 3px; }
    .app { width: 61px; border-bottom: 3px solid transparent; padding-top: 3px; position: relative; }
    .focused { background: #f4efed; border-color: #0063b8; }
    .open::after { content: ""; position: absolute; left: 5px; right: 5px; bottom: -3px; height: 3px; background: #0063b8; }
    .tray { display: flex; align-items: center; }
    .weather { gap: 10px; font-size: 17px; margin-right: 24px; white-space: nowrap; }
    .tray .status { width: 30px; }
    .lang { width: 50px; }
    .clock { width: 84px; display: flex; flex-direction: column; align-items: center; }
    .notes { width: 36px; margin-left: 15px; }
    .edge { align-self: stretch; width: 6px; margin-left: 13px; border-left: 1px solid #a9a4a2; }
  `];

  render() {
    return html`
      <button class="start" aria-label="Start">${icon(20, "0 0 20 20", svg`<path d="M0 3l8.500-1.200V9.500H0zM9.500 1.600L20 0v9.500H9.500zM0 10.500h8.500v7.700L0 17zM9.500 10.500H20V20L9.500 18.500z" fill="#000"/>`)}</button>
      <label class="search">${line(20, "M1 23l8-8M15 2a7 7 0 1 1 0 14 7 7 0 0 1 0-14z", 2, "#111")}
        <input aria-label="Search" placeholder="Type here to search" /></label>
      <button class="view" aria-label="Task view">${icon(20, "0 0 20 20", svg`<path d="M1 0v4h12V0M1 20v-4h12v4M1 6.500h12v7H1zM18.500 0v4M18.500 10v10" fill="none" stroke="#111" stroke-width="1.500"/><path d="M17 6h3v3h-3z" fill="#111"/>`)}</button>
      <div class="apps">${APPS.map((a) => html`<button class="app ${a.state ?? ""}" aria-label=${a.name}>${a.art}</button>`)}</div>
      <div class="tray">
        <button class="weather">${icon(30, "0 0 30 30", svg`
          <defs><linearGradient id="cloud" x1="0" y1="0" x2="0" y2="1"><stop stop-color="#d3e4ff"/><stop offset="1" stop-color="#85adf5"/></linearGradient></defs>
          <circle cx="21" cy="10" r="8" fill="#f7941d"/><path d="M6 29a6 6 0 0 1-.5-12C6.500 9 16 7.500 18.500 14c6 0 8 3 8 5C31 21 31 29 25 29z" fill="url(#cloud)"/>`)}
          <span>30°C</span><span>Mostly cloudy</span></button>
        <button class="status" aria-label="Show hidden icons">${line(17, "M2 18L12 7l10 11", 2.2)}</button>
        <button class="status" aria-label="Camera">${icon(18, "0 0 18 18", svg`<path d="M3 5h8.500v8H3zM11.500 8l4-2v6l-4-2M4 2.500q4-2.500 8 0M4 15.500q4 2.500 8 0" fill="none" stroke="#111" stroke-width="1.400"/>`)}</button>
        <button class="status" aria-label="OneDrive">${icon(22, "0 0 22 22", svg`<path d="M5 16a4.500 4.500 0 0 1-.5-9C6 2 13 1.500 15 6.500c4 0 5.500 3 5.500 5.500 0 3-2 4-4 4z" fill="#8c8988" stroke="#3c3a39" stroke-width="1.400"/><circle cx="15.500" cy="14" r="6" fill="#6d6a69"/><path d="M14 11v6M17 11v6" stroke="#fff" stroke-width="1.400"/>`)}</button>
        <button class="status" aria-label="Sync">${icon(22, "0 0 22 22", svg`<path d="M2 4l17-3v8M2 4v14l9 1.500" fill="none" stroke="#222" stroke-width="1.400"/><path d="M7 9a4 4 0 0 1 7-1M14 5v3.500h-3M14 12a4 4 0 0 1-7 .5M7 16v-3.500h3" fill="none" stroke="#222" stroke-width="1.300"/><circle cx="17" cy="17" r="5" fill="#2d74c0"/>`)}</button>
        <button class="status" aria-label="Battery">${icon(22, "0 0 22 22", svg`<path d="M5 7.500h14.500v8H4.500v-4" fill="none" stroke="#111" stroke-width="1.400"/><path d="M7 9.500h11v4.500H7zM20 10h2v3.500h-2zM1 5h6v3.500a3 3 0 0 1-6 0z" fill="#111"/><path d="M2.500 2.500V5M5.500 2.500V5M4 11v3" stroke="#111" stroke-width="1.200"/>`)}</button>
        <button class="status" aria-label="Volume">${icon(22, "0 0 22 22", svg`<path d="M1 8.500h3.500l4-4v13l-4-4H1z M11.500 8.500q2 2.500 0 5M14.500 6.500q3.500 4.500 0 9" fill="none" stroke="#111" stroke-width="1.400"/><path d="M17.500 4q5.500 7 0 14" fill="none" stroke="#a09b99" stroke-width="1.400"/>`)}</button>
        <button class="status" aria-label="Wi-Fi">${icon(18, "0 0 18 18", svg`<g fill="none" stroke="#333" stroke-width="1.400"><path d="M1.500 17A15 15 0 0 1 16.500 2M5.500 17A11 11 0 0 1 16.500 6M9 17a7.500 7.500 0 0 1 7.500-7.500"/></g><circle cx="14.500" cy="15" r="2" fill="#222"/>`)}</button>
        <button class="lang">ENG</button>
        <button class="clock"><span>10:58</span><span>30-07-2023</span></button>
        <button class="notes" aria-label="Notifications">${icon(36, "0 0 36 36", svg`
          <path d="M4 7h20v16h-9l-4 4v-4H4z" fill="#000"/><path d="M7 11.500h14M7 15h14M7 18.500h9" stroke="#ddd6d3" stroke-width="1.300"/>
          <circle cx="24" cy="25" r="9.500" fill="#d6d1cf" stroke="#8b8785" stroke-width="1.200"/><text x="24" y="30" font-size="14" font-weight="700" text-anchor="middle" fill="#111">5</text>`)}</button>
        <div class="edge"></div>
      </div>`;
  }
}

@customElement("app-root")
export class AppRoot extends LitElement {
  static styles = css`
    :host { display: grid; grid-template-columns: minmax(0, 1fr); grid-template-rows: auto minmax(0, 1fr) auto; height: 100vh; overflow: hidden; }
  `;

  render() {
    return html`<browser-frame></browser-frame><wallet-page></wallet-page><desktop-taskbar></desktop-taskbar>`;
  }
}
